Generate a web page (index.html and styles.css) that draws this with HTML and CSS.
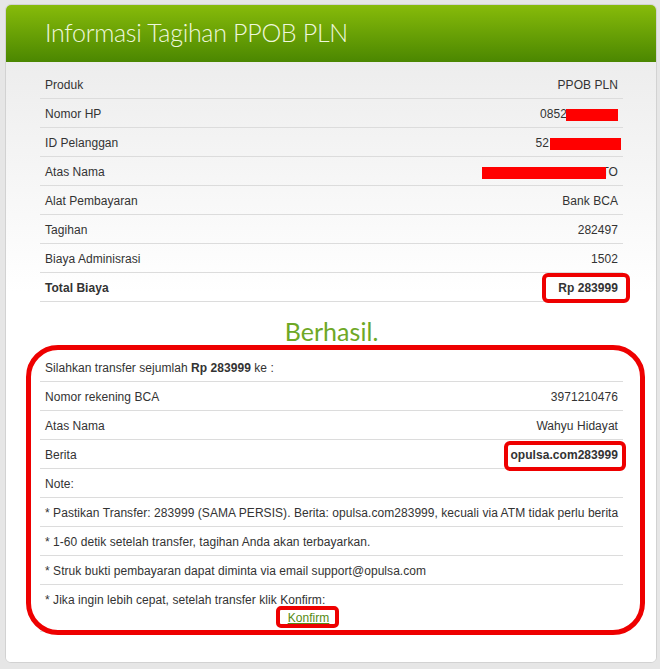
FILE: index.html
```html
<!DOCTYPE html>
<html lang="id">
<head>
<meta charset="utf-8">
<title>Informasi Tagihan PPOB PLN</title>
<link rel="stylesheet" href="styles.css">
</head>
<body>
<div class="card">
  <div class="card-header">
    <h1 class="title">Informasi Tagihan PPOB PLN</h1>
  </div>
  <div class="card-body">
    <div class="table">
      <div class="row"><span>Produk</span><span>PPOB PLN</span></div>
      <div class="row"><span>Nomor HP</span><span>0852<span class="redact redact-hp"></span></span></div>
      <div class="row"><span>ID Pelanggan</span><span>52<span class="redact redact-id"></span></span></div>
      <div class="row"><span>Atas Nama</span><span><span class="redact redact-name"></span>TO</span></div>
      <div class="row"><span>Alat Pembayaran</span><span>Bank BCA</span></div>
      <div class="row"><span>Tagihan</span><span>282497</span></div>
      <div class="row"><span>Biaya Adminisrasi</span><span>1502</span></div>
      <div class="row"><b>Total Biaya</b><b class="mark mark-total">Rp 283999</b></div>
    </div>

    <div class="success">Berhasil.</div>

    <div class="table table-transfer">
      <div class="row"><span>Silahkan transfer sejumlah <b>Rp 283999</b> ke :</span></div>
      <div class="row"><span>Nomor rekening BCA</span><span>3971210476</span></div>
      <div class="row"><span>Atas Nama</span><span>Wahyu Hidayat</span></div>
      <div class="row"><span>Berita</span><b class="mark mark-berita">opulsa.com283999</b></div>
      <div class="row"><span>Note:</span></div>
      <div class="row"><span>* Pastikan Transfer: 283999 (SAMA PERSIS). Berita: opulsa.com283999, kecuali via ATM tidak perlu berita</span></div>
      <div class="row"><span>* 1-60 detik setelah transfer, tagihan Anda akan terbayarkan.</span></div>
      <div class="row"><span>* Struk bukti pembayaran dapat diminta via email support@opulsa.com</span></div>
      <div class="row row-stack">
        <span>* Jika ingin lebih cepat, setelah transfer klik Konfirm:</span>
        <div class="confirm-line"><a href="#" class="confirm mark mark-confirm">Konfirm</a></div>
      </div>
    </div>
  </div>
</div>
</body>
</html>
```

FILE: styles.css
```css
* { box-sizing: border-box; }

html, body {
  margin: 0;
  padding: 0;
  background: #e6e6e6;
}

body {
  font-family: "Liberation Sans", Arial, sans-serif;
  font-size: 12px;
  letter-spacing: 0.05px;
  color: #333;
}

.card {
  margin: 4px 3px 0 5px;
  border: 1px solid #d2d2d2;
  border-radius: 6px;
  overflow: hidden;
  background: #fff;
}

.card-header {
  height: 57px;
  background: linear-gradient(#87bb0a, #4b8701);
  padding-left: 39px;
  display: flex;
  align-items: center;
}

.title {
  margin: 0;
  font-family: Lato, "Open Sans", sans-serif;
  font-weight: 300;
  font-size: 25px;
  letter-spacing: -0.3px;
  color: #eef7dc;
  padding-bottom: 3px;
}

.card-body {
  background: linear-gradient(#ededed, #ffffff 230px);
  padding: 8px 33px 30px 34px;
}

.table {
  display: flex;
  flex-direction: column;
}

.row {
  display: flex;
  justify-content: space-between;
  align-items: baseline;
  padding: 6px 5px 4px;
  line-height: 18px;
  border-bottom: 1px solid #dcdcdc;
  white-space: nowrap;
}

.row b { color: #333; }

.row-stack {
  flex-direction: column;
  align-items: stretch;
}

.confirm-line {
  text-align: center;
  padding-right: 46px;
}

.confirm {
  color: #578b14;
  text-decoration: underline;
}

.redact {
  display: inline-block;
  height: 12px;
  vertical-align: -3px;
  background: #ff0000;
  position: relative;
}
.redact-hp { width: 52px; margin-left: -1px; }
.redact-id { width: 71px; margin-left: 1px; margin-right: -3px; }
.redact-name { width: 124px; margin-right: -5px; }

.success {
  margin: 14px 0 7px;
  height: 30px;
  line-height: 30px;
  text-align: center;
  font-family: Lato, "Open Sans", sans-serif;
  font-size: 25px;
  color: #6ea826;
}

.table-transfer {
  position: relative;
}
.table-transfer::after {
  content: "";
  position: absolute;
  left: -14px;
  right: -22px;
  top: -8px;
  bottom: -3px;
  border: 5px solid #ee0000;
  border-radius: 32px;
  pointer-events: none;
}

.mark { position: relative; }
.mark::after {
  content: "";
  position: absolute;
  border: 4px solid #ee0000;
  border-radius: 6px;
  pointer-events: none;
}
.mark-total::after { left: -16px; right: -12px; top: -6px; bottom: -6px; }
.mark-berita::after { left: -6px; right: -8px; top: -5px; bottom: -7px; }
.mark-confirm { display: inline-block; }
.mark-confirm::after { left: -12px; right: -10px; top: -3px; bottom: -1px; border-radius: 5px; }
```
